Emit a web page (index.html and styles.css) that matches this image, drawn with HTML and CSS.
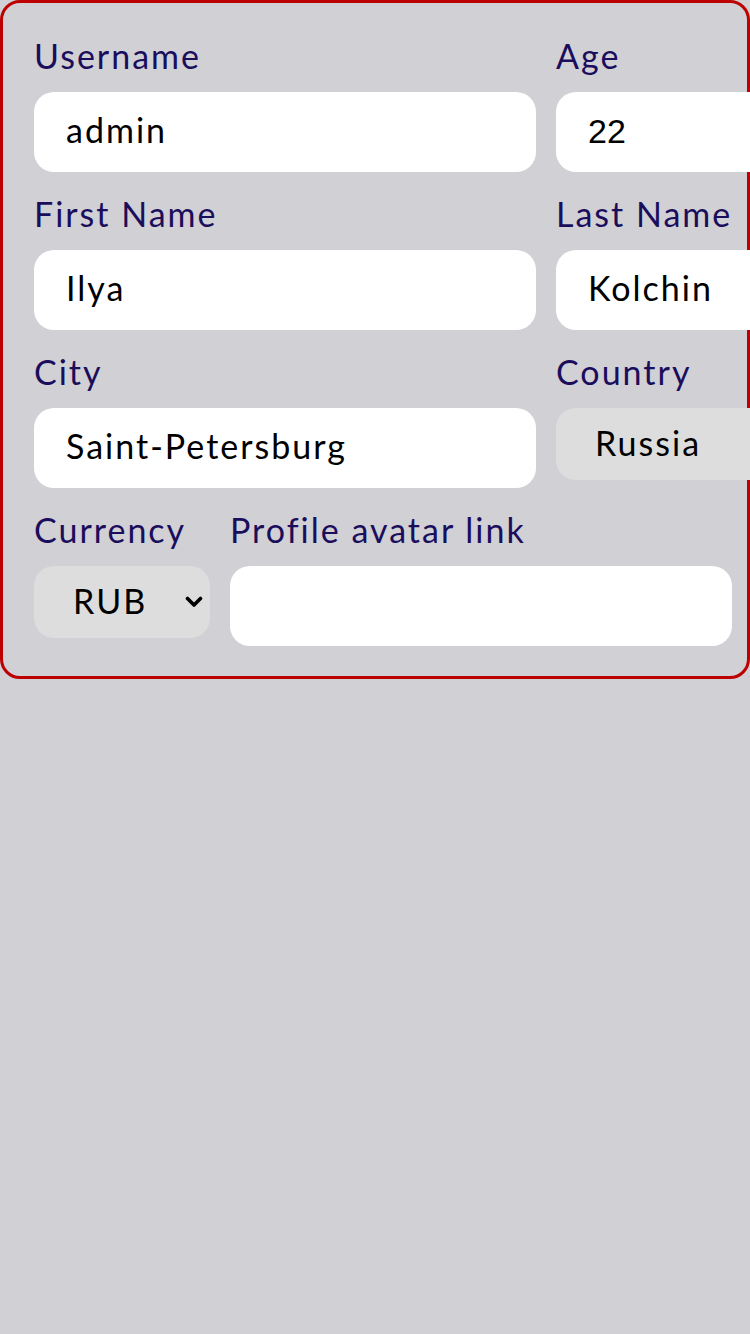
FILE: index.html
```html
<!DOCTYPE html>
<html lang="en">
<head>
<meta charset="utf-8">
<title>Profile</title>
<link rel="stylesheet" href="styles.css">
</head>
<body>
<form class="card">
  <div class="row">
    <div class="field wide">
      <label class="label">Username</label>
      <input class="input" type="text" value="admin">
    </div>
    <div class="field wide">
      <label class="label">Age</label>
      <input class="input number" type="text" value="22">
    </div>
  </div>
  <div class="row">
    <div class="field wide">
      <label class="label">First Name</label>
      <input class="input" type="text" value="Ilya">
    </div>
    <div class="field wide">
      <label class="label">Last Name</label>
      <input class="input" type="text" value="Kolchin">
    </div>
  </div>
  <div class="row">
    <div class="field wide">
      <label class="label">City</label>
      <input class="input" type="text" value="Saint-Petersburg">
    </div>
    <div class="field wide">
      <label class="label">Country</label>
      <div class="select-wrap country">
        <select class="select"><option>Russia</option></select>
      </div>
    </div>
  </div>
  <div class="row">
    <div class="field narrow">
      <label class="label">Currency</label>
      <div class="select-wrap currency">
        <select class="select"><option>RUB</option></select>
        <svg class="chevron" width="18" height="12" viewBox="0 0 18 12" aria-hidden="true"><path d="M2.5 2.5 L9 9 L15.5 2.5" fill="none" stroke="#000" stroke-width="3.6" stroke-linecap="round" stroke-linejoin="round"/></svg>
      </div>
    </div>
    <div class="field wide">
      <label class="label">Profile avatar link</label>
      <input class="input" type="text" value="">
    </div>
  </div>
</form>
</body>
</html>
```
FILE: styles.css
```css
html, body {
  margin: 0;
  padding: 0;
  background: #d1d0d5;
  overflow-x: hidden;
}
body {
  font-family: "Lato", "Noto Sans", sans-serif;
  min-height: 1334px;
}
.card {
  box-sizing: border-box;
  width: 750px;
  border: 3px solid #bd0000;
  border-radius: 20px;
  padding: 33px 15px 30px 31px;
  display: flex;
  flex-direction: column;
  gap: 22px;
}
.row {
  display: flex;
  gap: 20px;
  align-items: flex-start;
}
.field {
  display: flex;
  flex-direction: column;
  gap: 16px;
  flex-shrink: 0;
}
.wide { width: 502px; }
.narrow { width: 176px; }
.label {
  font-size: 34px;
  line-height: 40px;
  color: #1a0e5c;
  letter-spacing: 2px;
  white-space: nowrap;
}
.input {
  box-sizing: border-box;
  width: 502px;
  height: 80px;
  border: none;
  border-radius: 20px;
  background: #ffffff;
  padding: 0 32px 5px 32px;
  font-family: "Lato", "Noto Sans", sans-serif;
  font-size: 34px;
  letter-spacing: 2px;
  color: #000;
  outline: none;
}
.input.number {
  font-family: "Liberation Sans", Arial, sans-serif;
  letter-spacing: 0;
  font-size: 34px;
  padding-bottom: 2px;
}
.select-wrap {
  position: relative;
  height: 72px;
}
.currency { width: 176px; }
.country { width: 240px; }
.select {
  -webkit-appearance: none;
  appearance: none;
  box-sizing: border-box;
  width: 100%;
  height: 72px;
  border: none;
  border-radius: 20px;
  background-color: #dddddd;
  padding: 0 4px 4px 39px;
  font-family: "Lato", "Noto Sans", sans-serif;
  font-size: 34px;
  letter-spacing: 2px;
  color: #000;
  outline: none;
}
.chevron {
  position: absolute;
  right: 7px;
  top: 30px;
  pointer-events: none;
}
```
